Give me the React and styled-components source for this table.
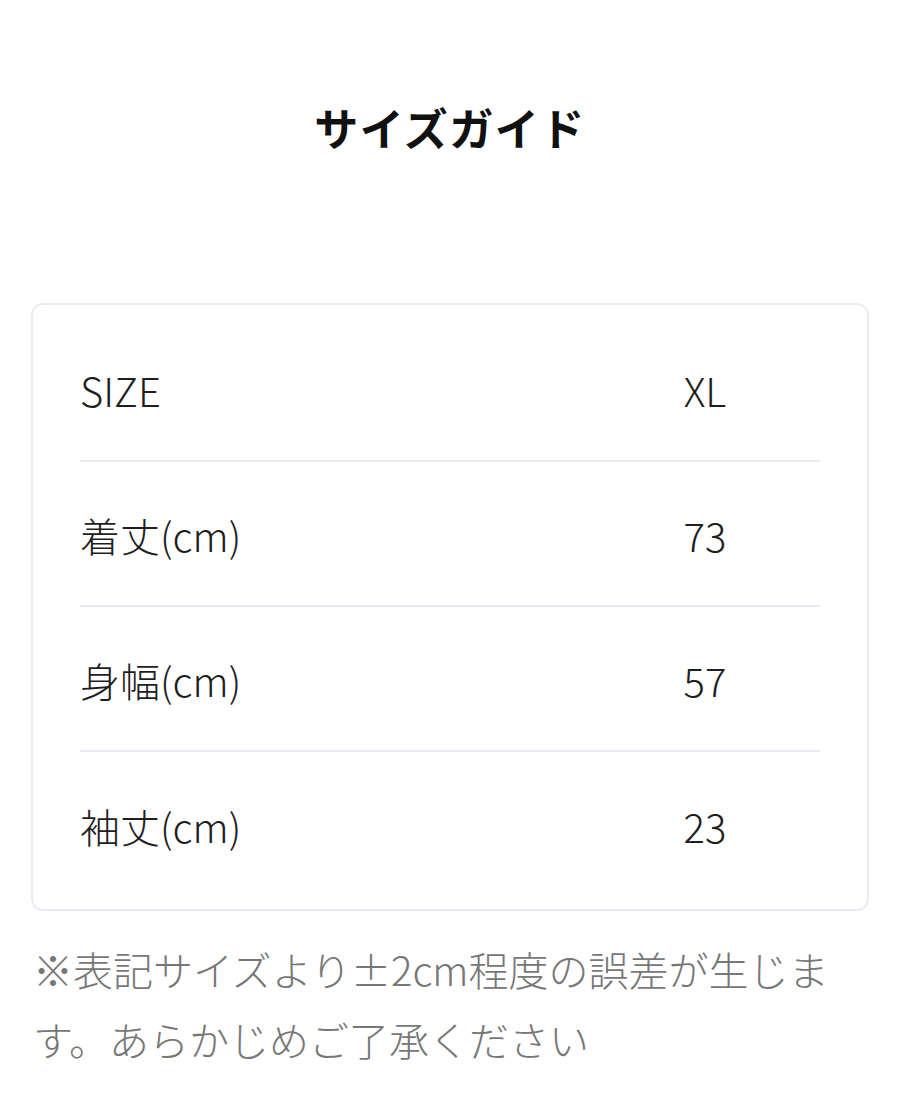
import styled, { createGlobalStyle } from "styled-components";

const GlobalStyle = createGlobalStyle`
  body {
    margin: 0;
    background: #ffffff;
    font-family: "Noto Sans CJK JP", "Noto Sans", sans-serif;
    color: #222222;
  }
`;

const Page = styled.div`
  padding: 0 31px 0 31px;
`;

const Title = styled.h1`
  margin: 0;
  padding-top: 97px;
  height: 303px;
  box-sizing: border-box;
  text-align: center;
  font-size: 44px;
  font-weight: 700;
  line-height: 60px;
  letter-spacing: 1.5px;
  color: #111111;
`;

const Card = styled.div`
  border: 2px solid #e8ecf2;
  border-radius: 12px;
  padding: 12px 47px 12px 47px;
`;

const Row = styled.div`
  display: grid;
  grid-template-columns: 1fr 230px;
  align-items: center;
  height: 145px;
  padding-top: 2px;
  box-sizing: border-box;
  border-bottom: ${(props) => (props.$last ? "none" : "2px solid #e6ebf2")};
`;

const Label = styled.span`
  font-size: 40px;
  font-weight: 300;
  color: #1e1e1e;
`;

const Value = styled.span`
  font-size: 40px;
  font-weight: 300;
  color: #1e1e1e;
  text-align: center;
`;

const Note = styled.p`
  margin: 23px 0 0 2px;
  font-size: 40px;
  font-weight: 300;
  line-height: 70px;
  color: #777777;
`;

const rows = [
  ["SIZE", "XL"],
  ["着丈(cm)", "73"],
  ["身幅(cm)", "57"],
  ["袖丈(cm)", "23"],
];

export default function App() {
  return (
    <>
      <GlobalStyle />
      <Page>
        <Title>サイズガイド</Title>
        <Card>
          {rows.map(([label, value], i) => (
            <Row key={label} $last={i === rows.length - 1}>
              <Label>{label}</Label>
              <Value>{value}</Value>
            </Row>
          ))}
        </Card>
        <Note>※表記サイズより±2cm程度の誤差が生じます。あらかじめご了承ください</Note>
      </Page>
    </>
  );
}
